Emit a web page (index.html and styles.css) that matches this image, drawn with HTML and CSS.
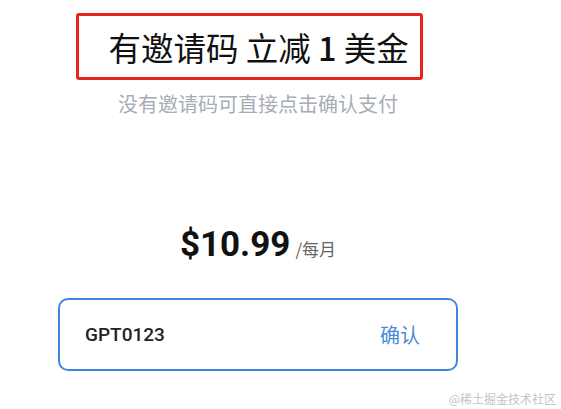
FILE: index.html
```html
<!DOCTYPE html>
<html lang="zh-CN">
<head>
  <meta charset="UTF-8" />
  <title>邀请码</title>
  <link rel="stylesheet" href="styles.css">
</head>
<body>

  <div class="panel">
    <div class="invite-title">
      <h1>有邀请码 立减 <b>1</b> 美金</h1>
    </div>
    <p class="hint">没有邀请码可直接点击确认支付</p>

    <div class="price">
      <span class="amount">$10.99</span>
      <span class="period">/每月</span>
    </div>

    <div class="code-box">
      <span class="code">GPT0123</span>
      <button class="confirm">确认</button>
    </div>
  </div>

  <div class="watermark">@稀土掘金技术社区</div>

</body>
</html>
```

FILE: styles.css
```css
body {
  margin: 0;
  background: #fff;
  font-family: Roboto, "Noto Sans CJK SC", sans-serif;
  height: 409px;
  position: relative;
  overflow: hidden;
}

.panel {
  width: 400px;
  margin-left: 58px;
  padding-top: 13px;
  display: flex;
  flex-direction: column;
  align-items: center;
}

.invite-title {
  width: 311px;
  height: 61px;
  margin-right: 18px;
  border: 3px solid #e8231d;
  border-radius: 3px;
  padding-left: 30px;
  display: flex;
  align-items: center;
}

.invite-title h1 {
  margin: 0;
  font-size: 32.5px;
  font-weight: 400;
  color: #111;
  white-space: nowrap;
  font-family: "Noto Sans CJK SC", sans-serif;
}

.invite-title b {
  font-weight: 500;
}

.hint {
  margin: 9px 0 0;
  font-size: 20px;
  color: #a6adb4;
  font-family: "Noto Sans CJK SC", sans-serif;
}

.price {
  margin-top: 106px;
  display: flex;
  align-items: baseline;
}

.amount {
  font-size: 35px;
  font-weight: 700;
  color: #111;
}

.period {
  margin-left: 5px;
  font-size: 17px;
  color: #666;
  font-family: "Noto Sans CJK SC", sans-serif;
}

.code-box {
  margin-top: 33px;
  box-sizing: border-box;
  width: 400px;
  height: 73px;
  border: 2px solid #3d87dd;
  border-radius: 10px;
  display: flex;
  align-items: center;
  justify-content: space-between;
  padding: 0 36px 0 25px;
}

.code {
  font-size: 19px;
  font-weight: 500;
  color: #222;
}

.confirm {
  border: none;
  background: none;
  padding: 0;
  font-size: 20px;
  color: #4a8ad8;
  font-family: "Noto Sans CJK SC", sans-serif;
  cursor: pointer;
}

.watermark {
  position: absolute;
  right: 5px;
  bottom: 2px;
  font-size: 12px;
  color: #c4c4c4;
  font-family: "Noto Sans CJK SC", sans-serif;
}
```
